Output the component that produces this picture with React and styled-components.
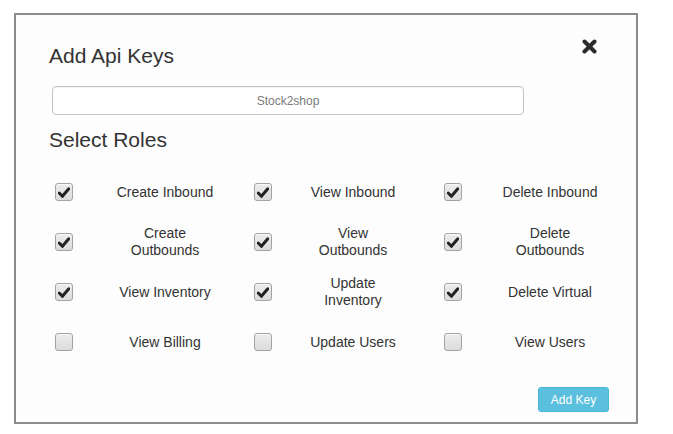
import React from 'react';
import styled, { createGlobalStyle } from 'styled-components';

const GlobalStyle = createGlobalStyle`
	html, body {
		margin: 0;
		padding: 0;
		background: #fff;
	}
	body {
		font-family: 'Liberation Sans', Arial, sans-serif;
		color: #333;
	}
`;

const roles = [
	[
		{ label: 'Create Inbound', checked: true },
		{ label: 'View Inbound', checked: true },
		{ label: 'Delete Inbound', checked: true },
	],
	[
		{ label: 'Create Outbounds', checked: true },
		{ label: 'View Outbounds', checked: true },
		{ label: 'Delete Outbounds', checked: true },
	],
	[
		{ label: 'View Inventory', checked: true },
		{ label: 'Update Inventory', checked: true },
		{ label: 'Delete Virtual', checked: true },
	],
	[
		{ label: 'View Billing', checked: false },
		{ label: 'Update Users', checked: false },
		{ label: 'View Users', checked: false },
	],
];

// distance between checkbox and label in each column
const labelGaps = [42, 31, 38];

const Check = ({ checked }) => (
	<Box>
		{checked && (
			<svg width='12' height='11' viewBox='0 0 12 11'>
				<path d='M1.2 6 L4.4 9.3 L10.8 1.8' fill='none' stroke='#222' strokeWidth='3' strokeLinecap='round' strokeLinejoin='round' />
			</svg>
		)}
	</Box>
);

export default function App() {
	return (
		<>
			<GlobalStyle />
			<Frame>
				<Header>
					<Title>Add Api Keys</Title>
					<Close aria-label='close'>
						<svg width='15' height='15' viewBox='0 0 15 15'>
							<path d='M2.5 2.5 L12.5 12.5 M12.5 2.5 L2.5 12.5' stroke='#2b2b2b' strokeWidth='4' strokeLinecap='round' />
						</svg>
					</Close>
				</Header>
				<KeyInput placeholder='Stock2shop' />
				<SubTitle>Select Roles</SubTitle>
				<Grid>
					{roles.map((row, r) =>
						row.map((role, c) => (
							<Cell key={r + '-' + c}>
								<Check checked={role.checked} />
								<Label $gap={labelGaps[c]}>{role.label}</Label>
							</Cell>
						))
					)}
				</Grid>
				<Footer>
					<AddButton>Add Key</AddButton>
				</Footer>
			</Frame>
		</>
	);
}

const Frame = styled.div`
	box-sizing: border-box;
	width: 624px;
	height: 411px;
	margin: 13px 0 0 14px;
	border: 2px solid #8c8c8c;
	background: #fdfdfd;
	padding: 29px 33px 10px 33px;
	display: flex;
	flex-direction: column;
`;

const Header = styled.div`
	display: flex;
	justify-content: space-between;
	align-items: flex-start;
`;

const Title = styled.h2`
	margin: 0;
	font-size: 21px;
	font-weight: normal;
	line-height: 23px;
	color: #333;
`;

const Close = styled.button`
	border: none;
	background: none;
	padding: 0;
	margin: -5px 6px 0 0;
	width: 15px;
	height: 15px;
	display: flex;
	cursor: pointer;
`;

const KeyInput = styled.input`
	box-sizing: border-box;
	margin: 19px 0 0 3px;
	width: 472px;
	height: 29px;
	border: 1px solid #c4c4c4;
	border-radius: 4px;
	background: #fff;
	box-shadow: inset 0 1px 1px rgba(0, 0, 0, 0.06);
	font-family: 'Liberation Sans', Arial, sans-serif;
	font-size: 12px;
	text-align: center;
	outline: none;
	&::placeholder {
		color: #7a7a7a;
	}
`;

const SubTitle = styled.h3`
	margin: 13px 0 0;
	font-size: 21px;
	font-weight: normal;
	line-height: 23px;
	color: #333;
`;

const Grid = styled.div`
	margin: 16px 0 0 6px;
	display: grid;
	grid-template-columns: 199px 190px 1fr;
	grid-auto-rows: 50px;
`;

const Cell = styled.div`
	display: flex;
	align-items: center;
`;

const Box = styled.span`
	box-sizing: border-box;
	width: 18px;
	height: 18px;
	flex: none;
	border: 1px solid #a3a3a3;
	border-radius: 3px;
	background: linear-gradient(#ececec, #dcdcdc);
	box-shadow: inset 0 1px 0 rgba(255, 255, 255, 0.7);
	display: flex;
	align-items: center;
	justify-content: center;
`;

const Label = styled.span`
	width: 100px;
	margin-left: ${(p) => p.$gap}px;
	font-size: 14px;
	line-height: 17px;
	text-align: center;
	color: #333;
`;

const Footer = styled.div`
	margin: 20px -6px 0 0;
	display: flex;
	justify-content: flex-end;
`;

const AddButton = styled.button`
	width: 71px;
	height: 25px;
	border: 1px solid #46b8da;
	border-radius: 3px;
	background: #5bc0de;
	color: #fff;
	font-family: 'Liberation Sans', Arial, sans-serif;
	font-size: 12px;
	padding: 0;
	cursor: pointer;
`;
